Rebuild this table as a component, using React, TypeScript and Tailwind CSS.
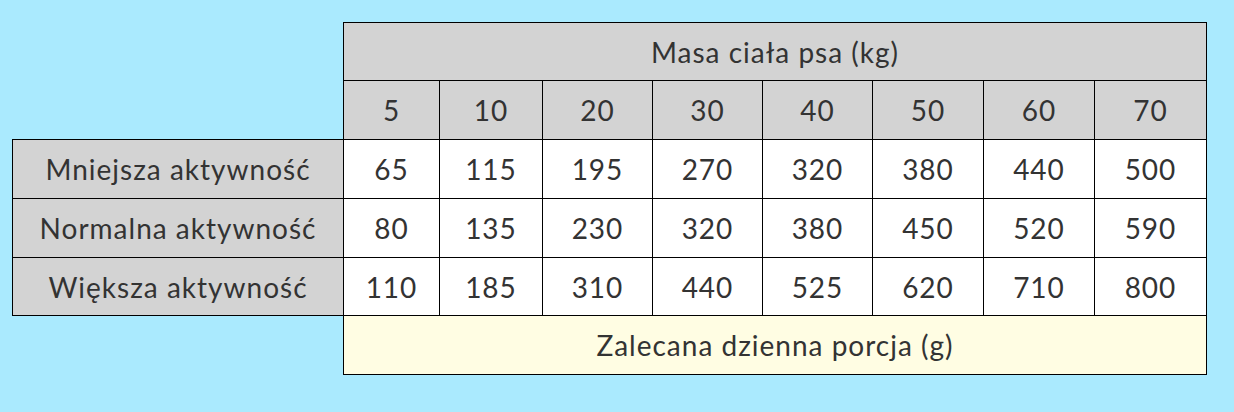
import React from "react";

const weights = [5, 10, 20, 30, 40, 50, 60, 70];
const rows: { label: string; values: number[] }[] = [
  { label: "Mniejsza aktywność", values: [65, 115, 195, 270, 320, 380, 440, 500] },
  { label: "Normalna aktywność", values: [80, 135, 230, 320, 380, 450, 520, 590] },
  { label: "Większa aktywność", values: [110, 185, 310, 440, 525, 620, 710, 800] },
];

export default function App() {
  return (
    <div
      className="w-[1234px] h-[412px] bg-[#aaeafe] pl-[12px] pt-[22px] text-[#333333]"
      style={{ fontFamily: "Lato, 'Noto Sans', sans-serif" }}
    >
      <div className="grid grid-cols-[331px_97px_103px_110px_110px_110px_111px_111px_112px] grid-rows-[59px_59px_59px_59px_58px_59px] text-[28px] leading-none tracking-[1px]">
        <div className="row-span-2 border-b border-black"></div>
        <div className="col-span-8 bg-[#d3d3d3] border border-black flex items-center justify-center">
          Masa ciała psa (kg)
        </div>
        {weights.map((w, i) => (
          <div
            key={w}
            className={
              i === 0
                ? "bg-[#d3d3d3] border-l border-r border-b border-black flex items-center justify-center"
                : "bg-[#d3d3d3] border-r border-b border-black flex items-center justify-center"
            }
          >
            {w}
          </div>
        ))}
        {rows.map((r) => (
          <React.Fragment key={r.label}>
            <div className="bg-[#d3d3d3] border-l border-b border-black flex items-center justify-center">
              {r.label}
            </div>
            {r.values.map((v, i) => (
              <div
                key={i}
                className={
                  i === 0
                    ? "bg-white border-l border-r border-b border-black flex items-center justify-center"
                    : "bg-white border-r border-b border-black flex items-center justify-center"
                }
              >
                {v}
              </div>
            ))}
          </React.Fragment>
        ))}
        <div></div>
        <div className="col-span-8 bg-[#fffde3] border-l border-r border-b border-black flex items-center justify-center">
          Zalecana dzienna porcja (g)
        </div>
      </div>
    </div>
  );
}
